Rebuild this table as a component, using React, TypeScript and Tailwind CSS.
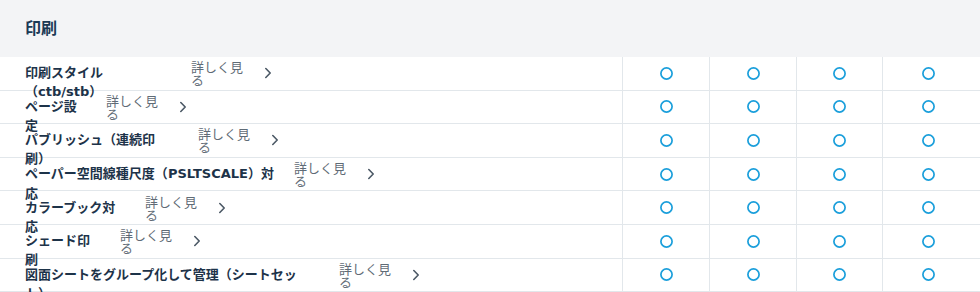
import React from "react";

const rows: { label: string; w: number }[] = [
  { label: "印刷スタイル（ctb/stb）", w: 146 },
  { label: "ページ設定", w: 61 },
  { label: "パブリッシュ（連続印刷）", w: 153 },
  { label: "ペーパー空間線種尺度（PSLTSCALE）対応", w: 249 },
  { label: "カラーブック対応", w: 100 },
  { label: "シェード印刷", w: 75 },
  { label: "図面シートをグループ化して管理（シートセット）", w: 294 },
];

function Label({ text }: { text: string }) {
  const parts = text.split(/([A-Za-z0-9/]+)/);
  return (
    <>
      {parts.map((p, i) =>
        /^[A-Za-z0-9/]+$/.test(p) ? (
          <span key={i} className="font-['DejaVu_Sans',sans-serif]">
            {p}
          </span>
        ) : (
          <React.Fragment key={i}>{p}</React.Fragment>
        )
      )}
    </>
  );
}

function Circle() {
  return (
    <svg width="15" height="15" viewBox="0 0 15 15">
      <circle cx="7.5" cy="7.5" r="5.6" fill="none" stroke="#1b9fdb" strokeWidth="1.7" />
    </svg>
  );
}

function Chevron() {
  return (
    <svg width="8" height="12" viewBox="0 0 8 12" className="shrink-0">
      <path d="M1.8 1.5 L6.2 6 L1.8 10.5" fill="none" stroke="#4b5865" strokeWidth="1.6" strokeLinecap="round" strokeLinejoin="round" />
    </svg>
  );
}

export default function App() {
  return (
    <div className="w-[980px] h-[292px] overflow-hidden bg-white font-['Noto_Sans_CJK_JP',sans-serif] [text-spacing-trim:space-all]">
      <div className="h-[57px] bg-[#f3f4f6] flex items-center px-[25px] pb-[3px]">
        <h2 className="text-[16px] font-bold text-[#1b3a55] leading-none">印刷</h2>
      </div>
      {rows.map((r, i) => (
        <div
          key={i}
          className="grid grid-cols-[622px_87px_87px_86px_92px] h-[33.6px] border-b border-[#e2e7eb]"
        >
          <div className="flex items-center pl-[25px]">
            <div
              className="h-[19px] leading-[19px] text-[13px] font-bold text-[#1d3349] shrink-0 -mt-[3px] [text-spacing-trim:space-all]"
              style={{ width: r.w }}
            >
              <Label text={r.label} />
            </div>
            <a className="ml-5 w-[54px] shrink-0 text-[13px] leading-[13px] text-[#5f6b76]">詳しく見る</a>
            <span className="ml-[19px] flex items-center">
              <Chevron />
            </span>
          </div>
          {[0, 1, 2, 3].map((c) => (
            <div key={c} className="flex items-center justify-center border-l border-[#e2e7eb]">
              <Circle />
            </div>
          ))}
        </div>
      ))}
    </div>
  );
}
